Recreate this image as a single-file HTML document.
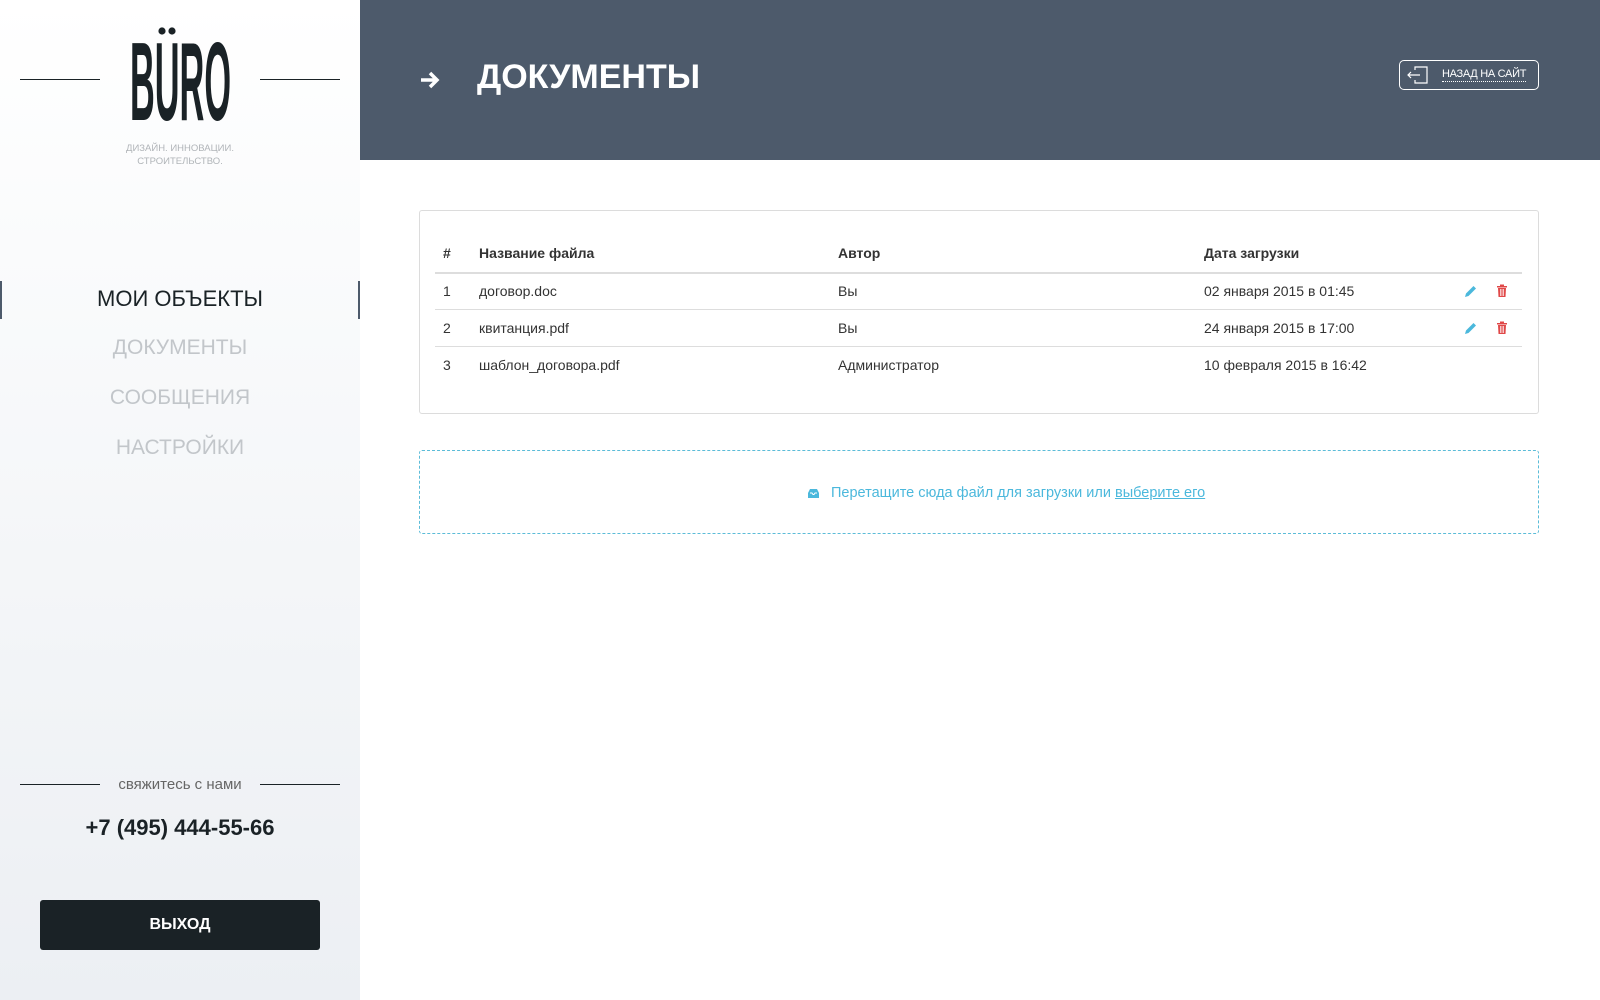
<!DOCTYPE html>
<html><head><meta charset="utf-8"><style>
*{margin:0;padding:0;box-sizing:border-box}
body{width:1600px;height:1000px;position:relative;font-family:"Liberation Sans",sans-serif;background:#fff;overflow:hidden;color:#222}
.side{position:absolute;left:0;top:0;width:360px;height:1000px;background:linear-gradient(#fff 0%,#fafbfc 25%,#eceff3 100%)}
.ab{position:absolute}
.line{position:absolute;height:1px;background:#1a2226}
.tag{position:absolute;left:0;width:360px;text-align:center;font-size:9.5px;color:#b0b4b8;line-height:13px;top:142px}
.nav{position:absolute;left:0;width:360px;text-align:center;font-size:22px;color:#c2c6ca}
.hdr{position:absolute;left:360px;top:0;width:1240px;height:160px;background:#4d5a6b}
.box{position:absolute;left:419px;top:210px;width:1120px;height:204px;border:1px solid #dcdcdc;border-radius:3px}
.t{position:absolute;font-size:14px;color:#333}
.b{font-weight:bold}
.hl{position:absolute;left:435px;width:1087px;height:1px;background:#ddd}
</style></head><body>
<div class="side">
<div class="line" style="left:20px;top:79px;width:80px"></div>
<div class="line" style="left:260px;top:79px;width:80px"></div>
<svg class="ab" style="left:0;top:0" width="360" height="130">
<text x="130" y="120" font-family="Liberation Sans Narrow, Liberation Sans, sans-serif" font-weight="bold" font-size="111" fill="#1a2226" textLength="101" lengthAdjust="spacingAndGlyphs">BURO</text>
<circle cx="162" cy="31" r="3.6" fill="#1a2226"/><circle cx="172" cy="31" r="3.6" fill="#1a2226"/>
</svg>
<div class="tag">ДИЗАЙН. ИННОВАЦИИ.<br>СТРОИТЕЛЬСТВО.</div>
<div class="ab" style="left:0;top:281px;width:2px;height:38px;background:#4d5a6b"></div>
<div class="ab" style="left:358px;top:281px;width:2px;height:38px;background:#4d5a6b"></div>
<div class="nav" style="top:286px;color:#1a2226">МОИ ОБЪЕКТЫ</div>
<div class="nav" style="top:336px;font-size:21px">ДОКУМЕНТЫ</div>
<div class="nav" style="top:386px;font-size:21px">СООБЩЕНИЯ</div>
<div class="nav" style="top:436px;font-size:21px">НАСТРОЙКИ</div>
<div class="line" style="left:20px;top:784px;width:80px"></div>
<div class="line" style="left:260px;top:784px;width:80px"></div>
<div class="ab" style="left:0;width:360px;top:776px;text-align:center;font-size:15px;color:#666">свяжитесь с нами</div>
<div class="ab" style="left:0;width:360px;top:815px;text-align:center;font-size:22px;font-weight:bold;color:#1a2226">+7 (495) 444-55-66</div>
<div class="ab" style="left:40px;top:900px;width:280px;height:50px;background:#1a2226;border-radius:3px;color:#fff;font-weight:bold;font-size:16px;text-align:center;line-height:50px">ВЫХОД</div>
</div>
<div class="hdr">
<svg class="ab" style="left:59px;top:70px" width="22" height="20" viewBox="0 0 22 20"><path d="M2 10H18M11 3L18 10L11 17" stroke="#fff" stroke-width="3.5" fill="none"/></svg>
<div class="ab" style="left:117px;top:58px;font-size:34px;font-weight:bold;color:#fff">ДОКУМЕНТЫ</div>
<div class="ab" style="left:1039px;top:60px;width:140px;height:30px;border:1px solid #fff;border-radius:5px">
<svg class="ab" style="left:7px;top:5px" width="22" height="18" viewBox="0 0 22 18"><path d="M8 4V1H20V17H8V14M1 9H13M4 6L1 9L4 12" stroke="#fff" stroke-width="1.2" fill="none"/></svg>
<div class="ab" style="left:42px;top:7px;font-size:11px;color:#fff;border-bottom:1px dotted #fff;line-height:13px;letter-spacing:-0.3px">НАЗАД НА САЙТ</div>
</div>
</div>
<div class="box"></div>
<div class="t b" style="left:443px;top:245px">#</div>
<div class="t b" style="left:479px;top:245px">Название файла</div>
<div class="t b" style="left:838px;top:245px">Автор</div>
<div class="t b" style="left:1204px;top:245px">Дата загрузки</div>
<div class="hl" style="top:272px;height:2px"></div>
<div class="t" style="left:443px;top:283px">1</div><div class="t" style="left:479px;top:283px">договор.doc</div><div class="t" style="left:838px;top:283px">Вы</div><div class="t" style="left:1204px;top:283px">02 января 2015 в 01:45</div>
<div class="hl" style="top:309px"></div>
<div class="t" style="left:443px;top:320px">2</div><div class="t" style="left:479px;top:320px">квитанция.pdf</div><div class="t" style="left:838px;top:320px">Вы</div><div class="t" style="left:1204px;top:320px">24 января 2015 в 17:00</div>
<div class="hl" style="top:346px"></div>
<div class="t" style="left:443px;top:357px">3</div><div class="t" style="left:479px;top:357px">шаблон_договора.pdf</div><div class="t" style="left:838px;top:357px">Администратор</div><div class="t" style="left:1204px;top:357px">10 февраля 2015 в 16:42</div>
<svg class="ab" style="left:1464px;top:284px" width="14" height="14" viewBox="0 0 14 14"><path d="M1 13L2 9.5L9.5 2L12 4.5L4.5 12Z" fill="#4bb8dc"/></svg>
<svg class="ab" style="left:1496px;top:284px" width="12" height="14" viewBox="0 0 12 14"><path d="M1 2H11V3.5H1ZM4 0.5H8V2H4ZM2 4H10L9.5 13H2.5Z" fill="#e04848"/><path d="M4.5 5V12M6 5V12M7.5 5V12" stroke="#fff" stroke-width=".7"/></svg>
<svg class="ab" style="left:1464px;top:321px" width="14" height="14" viewBox="0 0 14 14"><path d="M1 13L2 9.5L9.5 2L12 4.5L4.5 12Z" fill="#4bb8dc"/></svg>
<svg class="ab" style="left:1496px;top:321px" width="12" height="14" viewBox="0 0 12 14"><path d="M1 2H11V3.5H1ZM4 0.5H8V2H4ZM2 4H10L9.5 13H2.5Z" fill="#e04848"/><path d="M4.5 5V12M6 5V12M7.5 5V12" stroke="#fff" stroke-width=".7"/></svg>
<div class="ab" style="left:419px;top:450px;width:1120px;height:84px;border:1px dashed #5bbcd8;border-radius:3px"></div>
<svg class="ab" style="left:807px;top:488px" width="13" height="11" viewBox="0 0 13 11"><path d="M1 5L3 1H10L12 5V10H1Z" fill="#4bb8dc"/><path d="M3 5H5L6 6.5H7L8 5H10" stroke="#fff" fill="none"/></svg>
<div class="ab" style="left:831px;top:485px;font-size:14.5px;color:#4bb8dc">Перетащите сюда файл для загрузки или <span style="text-decoration:underline">выберите его</span></div>
</body></html>
